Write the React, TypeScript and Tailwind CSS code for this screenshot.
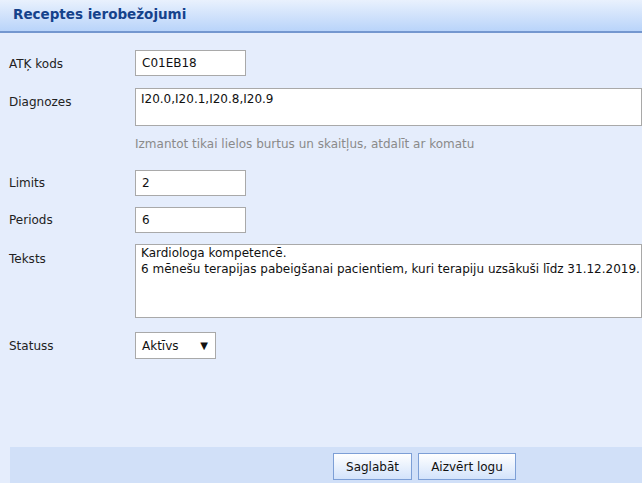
import React from "react";

const font = { fontFamily: '"DejaVu Sans", "Liberation Sans", sans-serif' };

function Label({ children, className = "" }: { children: React.ReactNode; className?: string }) {
  return <div className={`w-[126px] shrink-0 text-[12px] text-[#222] ${className}`}>{children}</div>;
}

export default function App() {
  return (
    <div className="w-[642px] h-[483px] overflow-hidden bg-[#e5edfc] flex flex-col" style={font}>
      <div className="h-[33px] shrink-0 bg-gradient-to-b from-[#e9f1fd] to-[#b9d4fa] border-b-2 border-[#7497cf] flex items-center pl-[13px] pb-[2px]">
        <span className="text-[13.5px] font-bold text-[#15428b]">Receptes ierobežojumi</span>
      </div>
      <div className="flex-1 flex flex-col pl-[9px] pt-[17px]">
        <div className="flex items-center h-[26px]">
          <Label className="pt-[2px]">ATĶ kods</Label>
          <div className="w-[111px] h-[26px] bg-white border border-[#a9a9a9] flex items-center pl-[6px] text-[12px] text-[#111]">C01EB18</div>
        </div>
        <div className="flex mt-[12px]">
          <Label className="pt-[5px]">Diagnozes</Label>
          <div className="w-[520px] h-[38px] bg-white border border-[#a9a9a9] pl-[5px] pt-[1px] text-[12px] text-[#111]">I20.0,I20.1,I20.8,I20.9</div>
        </div>
        <div className="ml-[126px] mt-[9px] text-[12px] text-[#8a8a8a]">Izmantot tikai lielos burtus un skaitļus, atdalīt ar komatu</div>
        <div className="flex items-center h-[26px] mt-[17px]">
          <Label>Limits</Label>
          <div className="w-[111px] h-[26px] bg-white border border-[#a9a9a9] flex items-center pl-[6px] text-[12px] text-[#111]">2</div>
        </div>
        <div className="flex items-center h-[26px] mt-[11px]">
          <Label>Periods</Label>
          <div className="w-[111px] h-[26px] bg-white border border-[#a9a9a9] flex items-center pl-[6px] text-[12px] text-[#111]">6</div>
        </div>
        <div className="flex mt-[11px]">
          <Label className="pt-[6px]">Teksts</Label>
          <div className="w-[520px] h-[74px] bg-white border border-[#a9a9a9] pl-[5px] pt-0 text-[12px] leading-[16px] text-[#111] whitespace-nowrap">
            <div>Kardiologa kompetencē.</div>
            <div>6 mēnešu terapijas pabeigšanai pacientiem, kuri terapiju uzsākuši līdz 31.12.2019.</div>
          </div>
        </div>
        <div className="flex items-center h-[27px] mt-[14px]">
          <Label>Statuss</Label>
          <div className="w-[81px] h-[27px] bg-white border border-[#a9a9a9] flex items-center justify-between pl-[6px] pr-[7px] text-[12px] text-[#111]">
            <span>Aktīvs</span>
            <span className="text-[10px]">▼</span>
          </div>
        </div>
      </div>
      <div className="h-[36px] shrink-0 ml-[10px] bg-[#d1e0f8] flex items-start pt-[6px] pl-[323px] gap-[6px]">
        <button className="h-[27px] w-[79px] border border-[#7d9fd6] bg-gradient-to-b from-[#ffffff] to-[#d3e3fb] text-[12px] text-[#111]">Saglabāt</button>
        <button className="h-[27px] w-[98px] border border-[#7d9fd6] bg-gradient-to-b from-[#ffffff] to-[#d3e3fb] text-[12px] text-[#111]">Aizvērt logu</button>
      </div>
    </div>
  );
}
